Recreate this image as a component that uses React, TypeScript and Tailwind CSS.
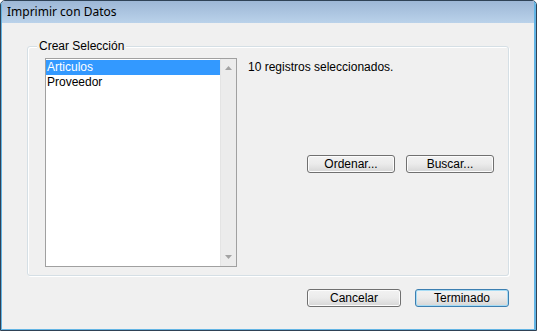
const ui = { fontFamily: '"Liberation Sans", Arial, sans-serif' };
const title = { fontFamily: '"Noto Sans", "Open Sans", sans-serif' };

function Btn({ label, w, h, focused }: { label: string; w: string; h: string; focused?: boolean }) {
  return (
    <button
      className={`${w} ${h} flex items-center justify-center rounded-[3px] border text-[12px] text-black bg-gradient-to-b from-[#f2f2f2] via-[#ebebeb] to-[#d6d6d6] ${
        focused ? 'border-[#3c7fb1] shadow-[inset_0_0_0_1px_#a6dcf5]' : 'border-[#707070] shadow-[inset_0_0_0_1px_#fcfcfc]'
      }`}
      style={ui}
    >
      {label}
    </button>
  );
}

export default function App() {
  return (
    <div className="w-[537px] h-[331px] border border-[#2f4256] rounded-t-[5px] overflow-hidden">
      <div className="h-full flex flex-col border-l border-r-2 border-b border-[#62b4e4]">
        <div className="h-[22px] flex items-center pl-[5px] bg-gradient-to-b from-[#9db7d6] to-[#bad2ea]">
          <span className="text-[12px] text-black leading-none" style={title}>Imprimir con Datos</span>
        </div>

        <div className="flex-1 bg-[#f0f0f0] flex flex-col pt-[23px] pl-[25px]">
          <div className="relative w-[482px] h-[230px] border border-[#d5dfe5] rounded-[3px] shadow-[inset_1px_1px_0_#ffffff,1px_1px_0_#ffffff] flex pt-[11px] pl-[17px]">
            <span className="absolute -top-[8px] left-[9px] px-[2px] bg-[#f0f0f0] text-[12px] text-black leading-[14px]" style={ui}>
              Crear Selección
            </span>

            <div className="w-[192px] h-[209px] border border-[#a0a0a0] bg-white flex">
              <div className="flex-1 pt-[1px] text-[12px] leading-[15px]" style={ui}>
                <div className="bg-[#3399ff] text-white pl-[1px] h-[15px]">Articulos</div>
                <div className="text-black pl-[1px] h-[15px]">Proveedor</div>
              </div>
              <div className="w-[16px] bg-[#ececec] border-l border-[#e4e4e4] flex flex-col justify-between items-center py-[7px]">
                <svg width="7" height="4" viewBox="0 0 7 4"><path d="M3.5 0 L7 4 L0 4 Z" fill="#a3a3a3" /></svg>
                <svg width="7" height="4" viewBox="0 0 7 4"><path d="M0 0 L7 0 L3.5 4 Z" fill="#a3a3a3" /></svg>
              </div>
            </div>

            <div className="flex flex-col pl-[11px] pt-[2px]">
              <span className="text-[12px] text-black leading-[14px]" style={ui}>10 registros seleccionados.</span>
              <div className="flex gap-[11px] pl-[59px] mt-[81px]">
                <Btn label="Ordenar..." w="w-[88px]" h="h-[18px]" />
                <Btn label="Buscar..." w="w-[88px]" h="h-[18px]" />
              </div>
            </div>
          </div>

          <div className="flex justify-end gap-[14px] mt-[13px] w-[482px]">
            <Btn label="Cancelar" w="w-[94px]" h="h-[18px]" />
            <Btn label="Terminado" w="w-[94px]" h="h-[18px]" focused />
          </div>
        </div>
      </div>
    </div>
  );
}
